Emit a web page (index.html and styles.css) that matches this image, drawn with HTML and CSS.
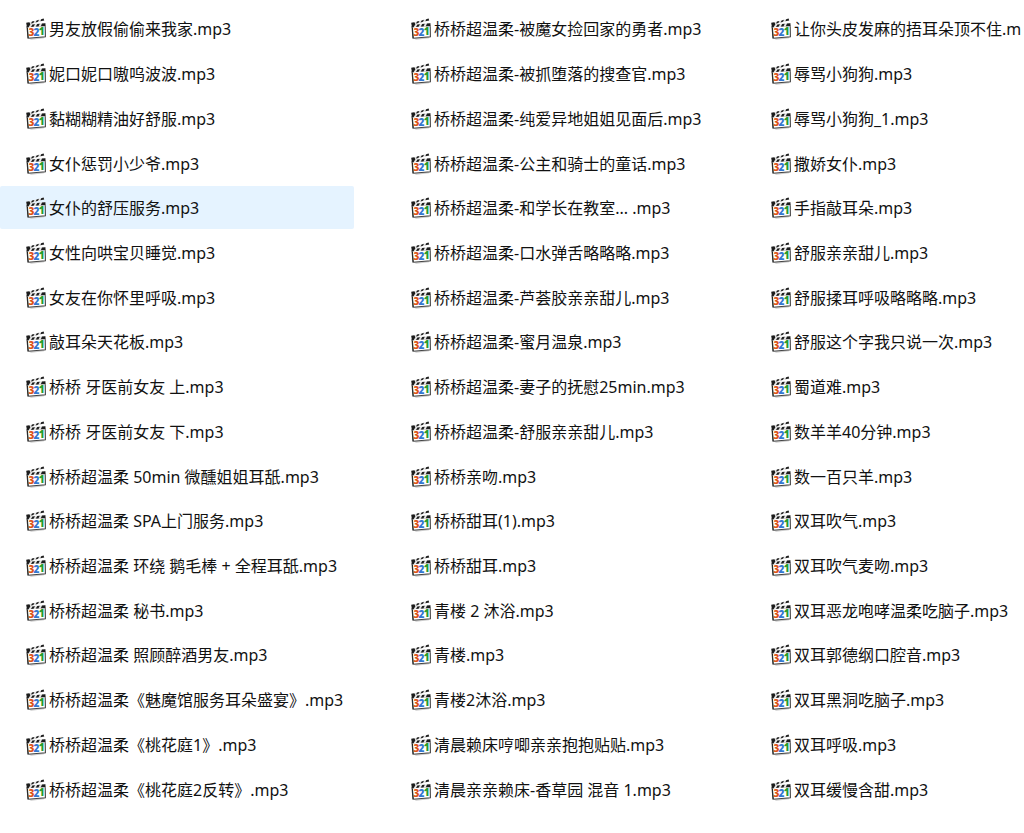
FILE: index.html
```html
<!DOCTYPE html>
<html lang="zh-CN">
<head>
  <meta charset="UTF-8">
  <meta name="viewport" content="width=device-width, initial-scale=1.0">
  <title>音频文件</title>
  <link rel="stylesheet" href="styles.css">
</head>
<body>
  <svg class="sprite" aria-hidden="true">
    <symbol id="clap" viewBox="0 0 20 22">
      <path d="M2 20L19 18.6L18 20.2L5 21.8Z" fill="#ccc"/>
      <path d="M1 8.6L19.2 7.4L19.4 18.8L2 20.2Z" fill="#fff" stroke="#444" stroke-width="1.1"/>
      <path d="M1.4 9L2.2 20" stroke="#222" stroke-width="1"/>
      <path d="M0.2 5L17.6 0.6L18.4 2.6L4 6.2L19.6 5V8.2L1 9.4Z" fill="#e4e4e4"/>
      <path d="M0.2 4.8L3.4 4.2L4.4 6.2L2.6 9.2L1 9.4ZM6 3.5L8.4 2.9L7.4 5L5 5.6ZM10.6 2.4L13 1.8L12 3.8L9.6 4.4ZM15.2 1.2L17.6 0.6L18.2 2.4L14.4 3.3Z" fill="#1c1c1c"/>
      <path d="M6.4 6.4L9 6.2L7.6 8.8L5 9ZM11.2 6L13.8 5.8L12.4 8.4L9.8 8.6ZM16 5.6L19.4 5.3V8L14.8 8.3Z" fill="#1c1c1c"/>
      <text class="digit" x="2.4" y="18.2" fill="#dc5418">3</text>
      <text class="digit" x="7.6" y="17.8" fill="#3478d0">2</text>
      <text class="digit" x="12.8" y="17.4" fill="#259a2c">1</text>
    </symbol>
  </svg>

  <ul class="file-list">
    <li><a class="file" href="#"><svg class="icon"><use href="#clap"/></svg>男友放假偷偷来我家.mp3</a></li>
    <li><a class="file" href="#"><svg class="icon"><use href="#clap"/></svg>妮口妮口嗷呜波波.mp3</a></li>
    <li><a class="file" href="#"><svg class="icon"><use href="#clap"/></svg>黏糊糊精油好舒服.mp3</a></li>
    <li><a class="file" href="#"><svg class="icon"><use href="#clap"/></svg>女仆惩罚小少爷.mp3</a></li>
    <li><a class="file active" href="#"><svg class="icon"><use href="#clap"/></svg>女仆的舒压服务.mp3</a></li>
    <li><a class="file" href="#"><svg class="icon"><use href="#clap"/></svg>女性向哄宝贝睡觉.mp3</a></li>
    <li><a class="file" href="#"><svg class="icon"><use href="#clap"/></svg>女友在你怀里呼吸.mp3</a></li>
    <li><a class="file" href="#"><svg class="icon"><use href="#clap"/></svg>敲耳朵天花板.mp3</a></li>
    <li><a class="file" href="#"><svg class="icon"><use href="#clap"/></svg>桥桥 牙医前女友 上.mp3</a></li>
    <li><a class="file" href="#"><svg class="icon"><use href="#clap"/></svg>桥桥 牙医前女友 下.mp3</a></li>
    <li><a class="file" href="#"><svg class="icon"><use href="#clap"/></svg>桥桥超温柔 50min 微醺姐姐耳舐.mp3</a></li>
    <li><a class="file" href="#"><svg class="icon"><use href="#clap"/></svg>桥桥超温柔 SPA上门服务.mp3</a></li>
    <li><a class="file" href="#"><svg class="icon"><use href="#clap"/></svg>桥桥超温柔 环绕 鹅毛棒 + 全程耳舐.mp3</a></li>
    <li><a class="file" href="#"><svg class="icon"><use href="#clap"/></svg>桥桥超温柔 秘书.mp3</a></li>
    <li><a class="file" href="#"><svg class="icon"><use href="#clap"/></svg>桥桥超温柔 照顾醉酒男友.mp3</a></li>
    <li><a class="file" href="#"><svg class="icon"><use href="#clap"/></svg>桥桥超温柔《魅魔馆服务耳朵盛宴》.mp3</a></li>
    <li><a class="file" href="#"><svg class="icon"><use href="#clap"/></svg>桥桥超温柔《桃花庭1》.mp3</a></li>
    <li><a class="file" href="#"><svg class="icon"><use href="#clap"/></svg>桥桥超温柔《桃花庭2反转》.mp3</a></li>

    <li><a class="file" href="#"><svg class="icon"><use href="#clap"/></svg>桥桥超温柔-被魔女捡回家的勇者.mp3</a></li>
    <li><a class="file" href="#"><svg class="icon"><use href="#clap"/></svg>桥桥超温柔-被抓堕落的搜查官.mp3</a></li>
    <li><a class="file" href="#"><svg class="icon"><use href="#clap"/></svg>桥桥超温柔-纯爱异地姐姐见面后.mp3</a></li>
    <li><a class="file" href="#"><svg class="icon"><use href="#clap"/></svg>桥桥超温柔-公主和骑士的童话.mp3</a></li>
    <li><a class="file" href="#"><svg class="icon"><use href="#clap"/></svg>桥桥超温柔-和学长在教室... .mp3</a></li>
    <li><a class="file" href="#"><svg class="icon"><use href="#clap"/></svg>桥桥超温柔-口水弹舌略略略.mp3</a></li>
    <li><a class="file" href="#"><svg class="icon"><use href="#clap"/></svg>桥桥超温柔-芦荟胶亲亲甜儿.mp3</a></li>
    <li><a class="file" href="#"><svg class="icon"><use href="#clap"/></svg>桥桥超温柔-蜜月温泉.mp3</a></li>
    <li><a class="file" href="#"><svg class="icon"><use href="#clap"/></svg>桥桥超温柔-妻子的抚慰25min.mp3</a></li>
    <li><a class="file" href="#"><svg class="icon"><use href="#clap"/></svg>桥桥超温柔-舒服亲亲甜儿.mp3</a></li>
    <li><a class="file" href="#"><svg class="icon"><use href="#clap"/></svg>桥桥亲吻.mp3</a></li>
    <li><a class="file" href="#"><svg class="icon"><use href="#clap"/></svg>桥桥甜耳(1).mp3</a></li>
    <li><a class="file" href="#"><svg class="icon"><use href="#clap"/></svg>桥桥甜耳.mp3</a></li>
    <li><a class="file" href="#"><svg class="icon"><use href="#clap"/></svg>青楼 2 沐浴.mp3</a></li>
    <li><a class="file" href="#"><svg class="icon"><use href="#clap"/></svg>青楼.mp3</a></li>
    <li><a class="file" href="#"><svg class="icon"><use href="#clap"/></svg>青楼2沐浴.mp3</a></li>
    <li><a class="file" href="#"><svg class="icon"><use href="#clap"/></svg>清晨赖床哼唧亲亲抱抱贴贴.mp3</a></li>
    <li><a class="file" href="#"><svg class="icon"><use href="#clap"/></svg>清晨亲亲赖床-香草园 混音 1.mp3</a></li>

    <li><a class="file" href="#"><svg class="icon"><use href="#clap"/></svg>让你头皮发麻的捂耳朵顶不住.m</a></li>
    <li><a class="file" href="#"><svg class="icon"><use href="#clap"/></svg>辱骂小狗狗.mp3</a></li>
    <li><a class="file" href="#"><svg class="icon"><use href="#clap"/></svg>辱骂小狗狗_1.mp3</a></li>
    <li><a class="file" href="#"><svg class="icon"><use href="#clap"/></svg>撒娇女仆.mp3</a></li>
    <li><a class="file" href="#"><svg class="icon"><use href="#clap"/></svg>手指敲耳朵.mp3</a></li>
    <li><a class="file" href="#"><svg class="icon"><use href="#clap"/></svg>舒服亲亲甜儿.mp3</a></li>
    <li><a class="file" href="#"><svg class="icon"><use href="#clap"/></svg>舒服揉耳呼吸略略略.mp3</a></li>
    <li><a class="file" href="#"><svg class="icon"><use href="#clap"/></svg>舒服这个字我只说一次.mp3</a></li>
    <li><a class="file" href="#"><svg class="icon"><use href="#clap"/></svg>蜀道难.mp3</a></li>
    <li><a class="file" href="#"><svg class="icon"><use href="#clap"/></svg>数羊羊40分钟.mp3</a></li>
    <li><a class="file" href="#"><svg class="icon"><use href="#clap"/></svg>数一百只羊.mp3</a></li>
    <li><a class="file" href="#"><svg class="icon"><use href="#clap"/></svg>双耳吹气.mp3</a></li>
    <li><a class="file" href="#"><svg class="icon"><use href="#clap"/></svg>双耳吹气麦吻.mp3</a></li>
    <li><a class="file" href="#"><svg class="icon"><use href="#clap"/></svg>双耳恶龙咆哮温柔吃脑子.mp3</a></li>
    <li><a class="file" href="#"><svg class="icon"><use href="#clap"/></svg>双耳郭德纲口腔音.mp3</a></li>
    <li><a class="file" href="#"><svg class="icon"><use href="#clap"/></svg>双耳黑洞吃脑子.mp3</a></li>
    <li><a class="file" href="#"><svg class="icon"><use href="#clap"/></svg>双耳呼吸.mp3</a></li>
    <li><a class="file" href="#"><svg class="icon"><use href="#clap"/></svg>双耳缓慢含甜.mp3</a></li>
  </ul>
</body>
</html>
```
FILE: styles.css
```css
* {
  box-sizing: border-box;
}

body {
  margin: 0;
  background: #fff;
  color: #111;
  font-family: "Noto Sans", "Noto Sans CJK SC", sans-serif;
  font-size: 16px;
  line-height: 24px;
}

.sprite {
  display: none;
}

.digit {
  font-family: "Open Sans", sans-serif;
  font-size: 10px;
  font-weight: 800;
}

/* files run down each column first */
.file-list {
  display: grid;
  grid-auto-flow: column;
  grid-template-columns: 385fr 360fr 279fr;
  grid-template-rows: repeat(18, 1fr);
  row-gap: 2px;
  min-height: 100vh;
  margin: 0;
  padding: 7px 0 23px;
  list-style: none;
  overflow: hidden;
}

.file-list li {
  display: flex;
  min-width: 0;
  padding-right: 31px;
}

.file {
  display: flex;
  flex: 1;
  align-items: center;
  gap: 3px;
  min-width: 0;
  padding: 2px 0 0 26px;
  border-radius: 2px;
  color: inherit;
  text-decoration: none;
  white-space: nowrap;
}

.file:hover,
.file.active {
  background: #e5f3ff;
}

.icon {
  flex: none;
  width: 20px;
  height: 22px;
}
```
